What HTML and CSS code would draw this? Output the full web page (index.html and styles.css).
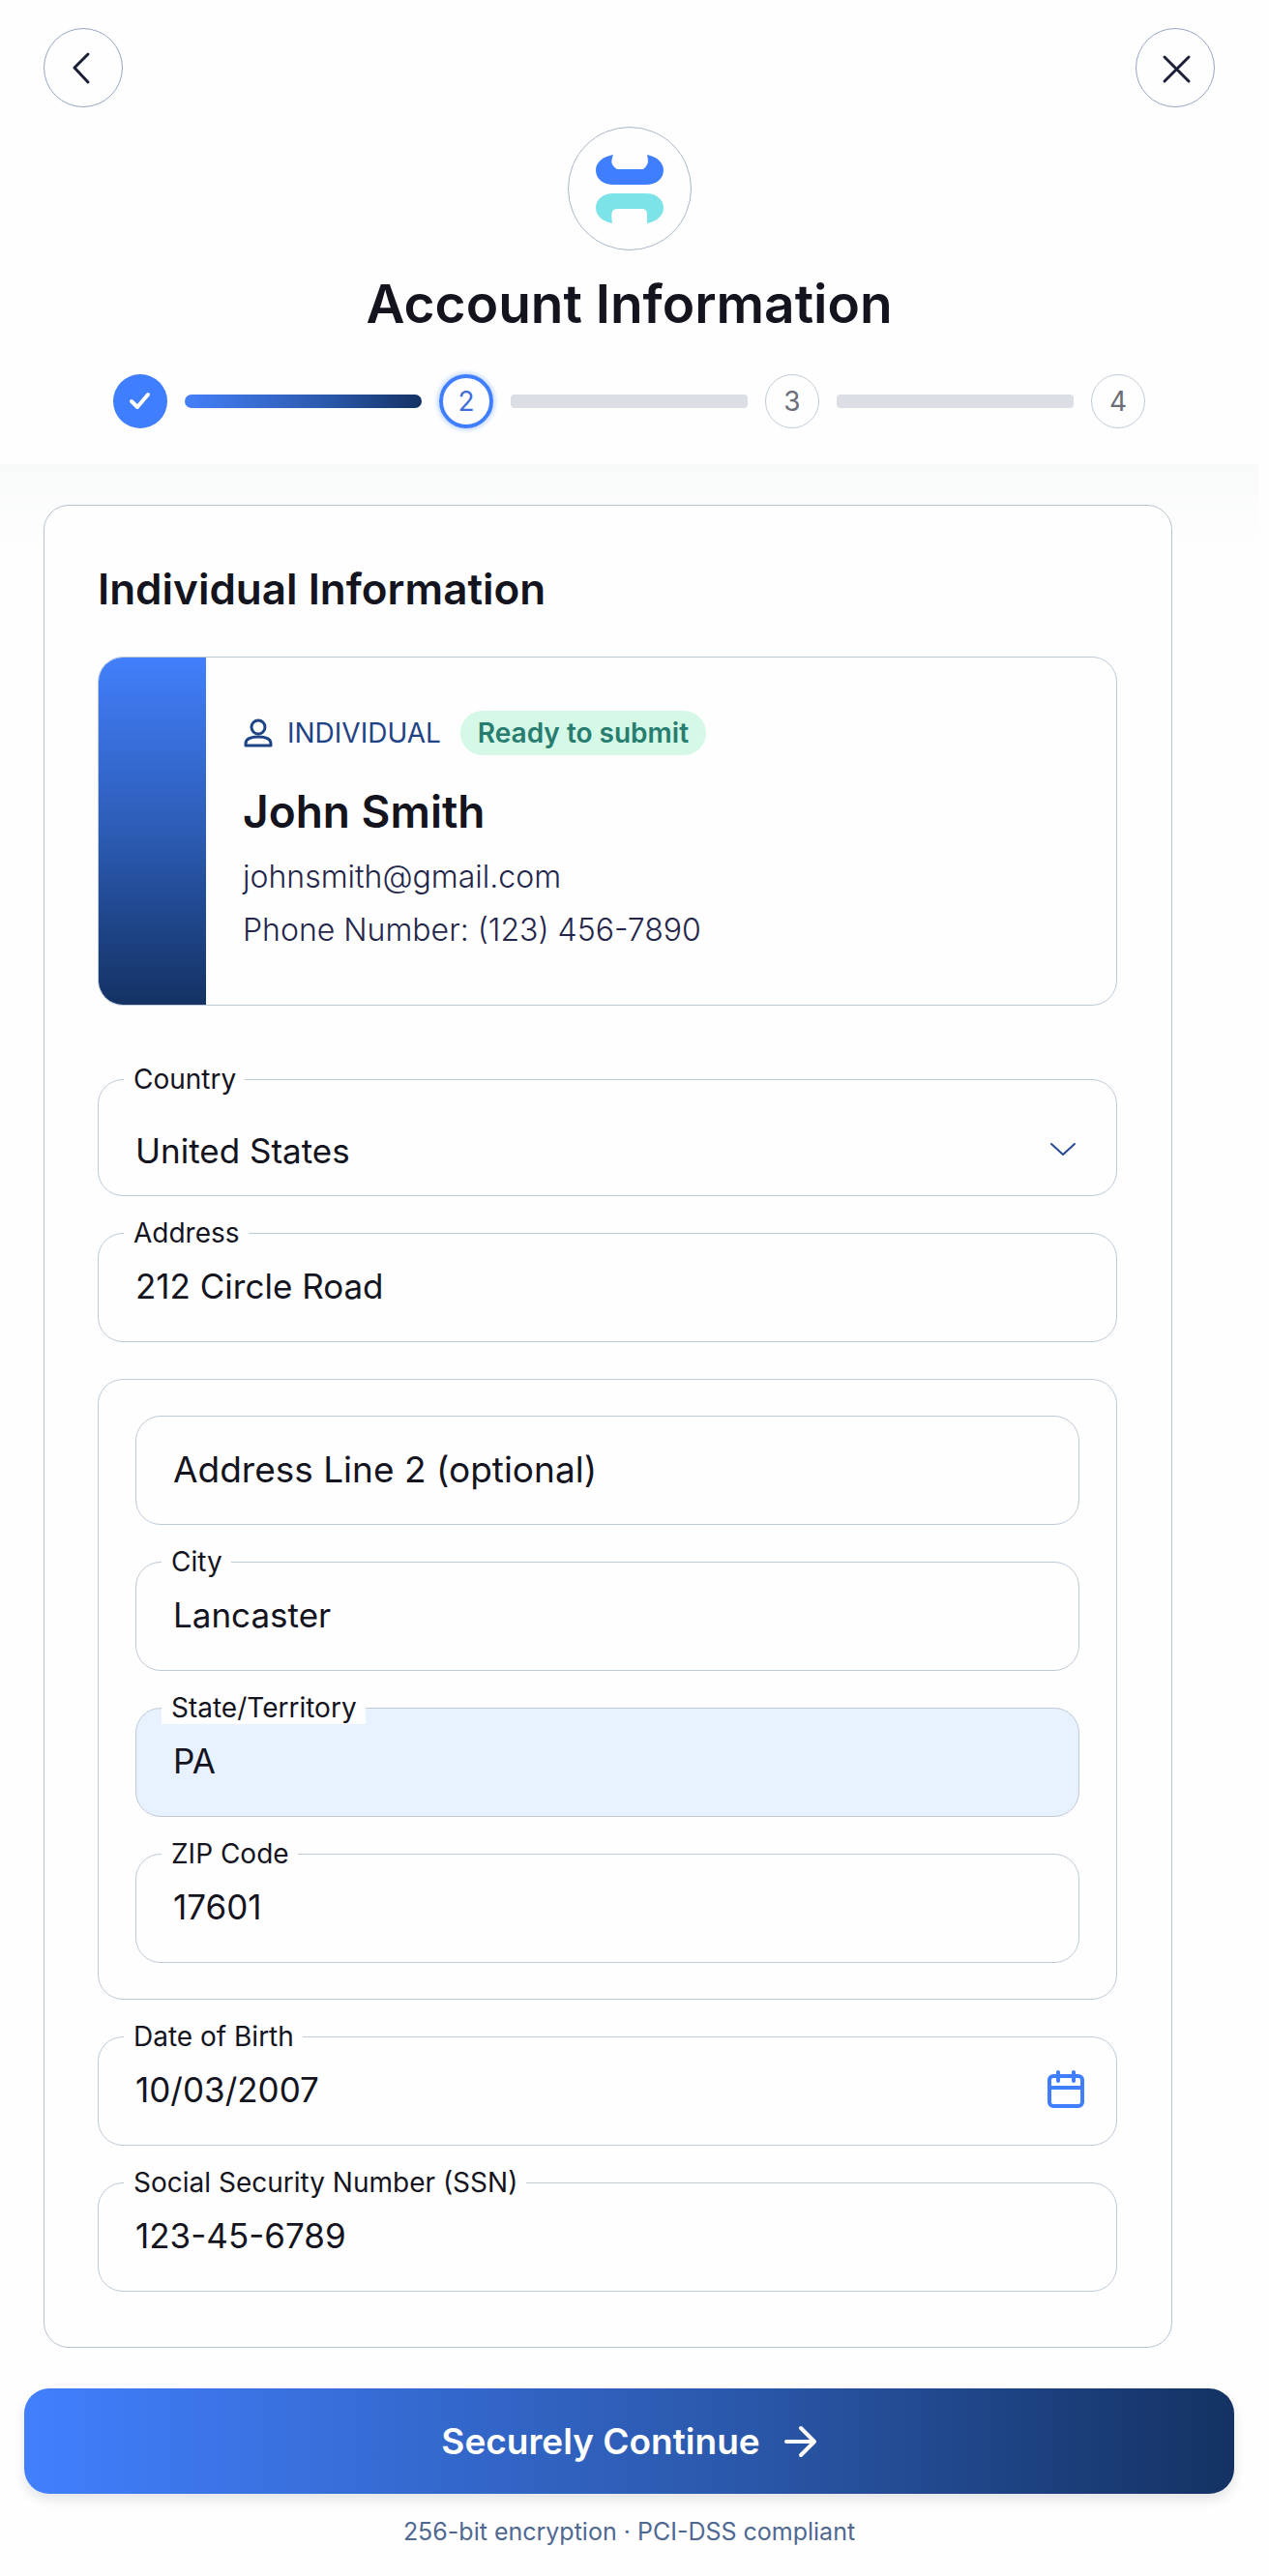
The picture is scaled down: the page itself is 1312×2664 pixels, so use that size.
FILE: index.html
```html
<!DOCTYPE html>
<html lang="en">
<head>
  <meta charset="UTF-8">
  <meta name="viewport" content="width=device-width, initial-scale=1">
  <title>Account Information</title>
  <link rel="stylesheet" href="styles.css">
</head>
<body>
  <header class="header">
    <div class="top-bar">
      <button type="button" class="round-button" aria-label="Back">
        <svg width="40" height="40" viewBox="0 0 40 40"><path d="M25 6 L11 20 L25 35"/></svg>
      </button>
      <button type="button" class="round-button" aria-label="Close">
        <svg width="40" height="40" viewBox="0 0 40 40"><path d="M9 9 L34 34 M34 9 L9 34"/></svg>
      </button>
    </div>

    <div class="logo">
      <svg width="70" height="71" viewBox="0 0 70 71">
        <path fill="#3f7efe" d="M18 0 C7 2 0 8 0 16 C0 25 8 31 18 31 H52 C62 31 70 25 70 16 C70 8 63 2 53 0 C55 8 54 11 49 15 H22 C16 11 15 8 18 0 Z"/>
        <path fill="#7ce3e8" d="M18 40 C8 40 0 46 0 55 C0 63 7 69 17 71 C16 62 15 56 23 56 H48 C54 56 53 62 53 71 C63 69 70 63 70 55 C70 46 62 40 52 40 Z"/>
      </svg>
    </div>

    <h1>Account Information</h1>

    <div class="stepper">
      <div class="step done">
        <svg width="24" height="24" viewBox="0 0 24 24"><path d="M3 12 L9 18 L20 5"/></svg>
      </div>
      <div class="bar filled"></div>
      <div class="step current">2</div>
      <div class="bar"></div>
      <div class="step">3</div>
      <div class="bar"></div>
      <div class="step">4</div>
    </div>
  </header>

  <form class="content">
    <section class="card">
      <h2>Individual Information</h2>

      <div class="profile">
        <div class="profile-stripe"></div>
        <div class="profile-body">
          <div class="profile-tags">
            <svg width="30" height="30" viewBox="0 0 30 30"><circle cx="15" cy="9" r="7"/><path d="M2 28 V26 C2 21 7 19 15 19 C23 19 28 21 28 26 V28 Z"/></svg>
            <span class="profile-type">INDIVIDUAL</span>
            <span class="badge">Ready to submit</span>
          </div>
          <h3>John Smith</h3>
          <p>johnsmith@gmail.com</p>
          <p>Phone Number: (123) 456-7890</p>
        </div>
      </div>

      <div class="fields">
        <div class="field">
          <label for="country">Country</label>
          <select id="country">
            <option>United States</option>
          </select>
          <svg class="chevron" width="28" height="18" viewBox="0 0 28 18"><path d="M2 3 L14 14 L26 3"/></svg>
        </div>

        <div class="field">
          <label for="address">Address</label>
          <input type="text" id="address" value="212 Circle Road">
        </div>

        <div class="field-group">
          <div class="field">
            <input type="text" id="address2" class="optional" placeholder="Address Line 2 (optional)" aria-label="Address Line 2 (optional)">
          </div>
          <div class="field">
            <label for="city">City</label>
            <input type="text" id="city" value="Lancaster">
          </div>
          <div class="field">
            <label for="state">State/Territory</label>
            <input type="text" id="state" class="autofilled" value="PA">
          </div>
          <div class="field">
            <label for="zip">ZIP Code</label>
            <input type="text" id="zip" value="17601">
          </div>
        </div>

        <div class="field">
          <label for="dob">Date of Birth</label>
          <input type="text" id="dob" value="10/03/2007">
          <svg class="calendar" width="40" height="40" viewBox="0 0 40 40"><rect x="3" y="6" width="34" height="31" rx="4"/><path d="M3 18 H37 M12 2 V11 M28 2 V11"/></svg>
        </div>

        <div class="field">
          <label for="ssn">Social Security Number (SSN)</label>
          <input type="text" id="ssn" value="123-45-6789">
        </div>
      </div>
    </section>

    <div class="actions">
      <button type="submit" class="continue">
        Securely Continue
        <svg width="34" height="34" viewBox="0 0 34 34"><path d="M2 17 H31 M17 3 L31 17 L17 31"/></svg>
      </button>
      <p class="note">256-bit encryption · PCI-DSS compliant</p>
    </div>
  </form>
</body>
</html>
```
FILE: styles.css
```css
* {
  box-sizing: border-box;
}
body {
  font-family: Inter, "Liberation Sans", sans-serif;
  margin: 0;
  padding-right: 11px;
  background-color: #fefefe;
  color: #14141f;
}
h1, h2, h3, p {
  margin: 0;
}
svg {
  fill: none;
  stroke-linecap: round;
  stroke-linejoin: round;
  flex-shrink: 0;
}

/* Header */
.header {
  padding: 29px 45px 37px;
  text-align: center;
}
.top-bar {
  display: flex;
  justify-content: space-between;
}
.round-button {
  display: flex;
  align-items: center;
  justify-content: center;
  width: 82px;
  height: 82px;
  padding: 0;
  border: 1px solid #94a6c2;
  border-radius: 50%;
  background: none;
  cursor: pointer;
}
.round-button svg {
  stroke: #1b1f38;
  stroke-width: 3;
}
.logo {
  display: flex;
  align-items: center;
  justify-content: center;
  width: 128px;
  height: 128px;
  margin: 20px auto 0;
  border: 1px solid #a9b7ca;
  border-radius: 50%;
}
h1 {
  margin: 20px 0 38px;
  font-size: 55px;
  line-height: 70px;
  font-weight: 600;
}
.stepper {
  display: flex;
  align-items: center;
  gap: 18px;
  padding: 0 72px;
}
.step {
  display: flex;
  align-items: center;
  justify-content: center;
  width: 56px;
  height: 56px;
  border: 1px solid #c1ccd9;
  border-radius: 50%;
  font-size: 28px;
  color: #6b6e78;
}
.step.done {
  border: none;
  background-color: #3f7efe;
}
.step.done svg {
  stroke: #fff;
  stroke-width: 4;
}
.step.current {
  border: 4px solid #3f7efe;
  box-shadow: 0 0 4px 2px #c5dafc;
  color: #3f6fd8;
}
.bar {
  flex: 1;
  height: 14px;
  border-radius: 4px;
  background-color: #dbdfe5;
}
.bar.filled {
  border-radius: 7px;
  background: linear-gradient(90deg, #4580f8, #2a58ab 60%, #143263);
}

/* Form card */
.content {
  padding-top: 42px;
  background: linear-gradient(#f8faf9, #fefefe 90px);
}
.card {
  margin: 0 89px 0 45px;
  padding: 56px 56px 57px 55px;
  border: 1px solid #b9c4d2;
  border-radius: 26px;
  background-color: #fefefe;
}
h2 {
  font-size: 44px;
  line-height: 60px;
  font-weight: 600;
}
.profile {
  display: flex;
  height: 361px;
  margin-top: 40px;
  border: 1px solid #bccada;
  border-radius: 26px;
  overflow: hidden;
}
.profile-stripe {
  width: 111px;
  background: linear-gradient(#427ffb, #2c5cb5 50%, #143263);
}
.profile-body {
  padding: 55px 38px;
}
.profile-tags {
  display: flex;
  align-items: center;
}
.profile-tags svg {
  margin: 0 15px 0 1px;
  stroke: #1f4485;
  stroke-width: 3;
}
.profile-type {
  font-size: 28px;
  color: #1f4485;
}
.badge {
  margin-left: 20px;
  padding: 0 18px;
  border-radius: 23px;
  background-color: #d6f8e6;
  color: #267d70;
  font-size: 28px;
  line-height: 46px;
  font-weight: 600;
}
h3 {
  margin: 28px 0 10px;
  font-size: 46px;
  line-height: 60px;
  font-weight: 600;
}
.profile p {
  font-size: 32px;
  line-height: 55px;
  font-weight: 300;
  color: #23264a;
}

/* Fields */
.fields {
  display: grid;
  gap: 38px;
  margin-top: 76px;
}
.field {
  position: relative;
}
.field label {
  position: absolute;
  top: -17px;
  left: 27px;
  padding: 0 9px 0 10px;
  background-color: #fefefe;
  font-size: 28px;
  line-height: 34px;
}
.field input,
.field select {
  display: block;
  width: 100%;
  height: 113px;
  padding: 0 38px 3px;
  border: 1px solid #bfcbd9;
  border-radius: 26px;
  outline: none;
  background-color: #fefefe;
  font-family: inherit;
  font-size: 35px;
  color: #14141f;
}
.field select {
  height: 121px;
  padding: 26px 38px 0;
  appearance: none;
}
.field input::placeholder {
  color: #14141f;
  opacity: 1;
}
.field .optional {
  font-size: 37px;
}
.field .autofilled {
  background-color: #e8f1fe;
}
.field-group {
  display: grid;
  gap: 38px;
  padding: 37px 38px;
  border: 1px solid #bfcbd9;
  border-radius: 26px;
}
.chevron,
.calendar {
  position: absolute;
  pointer-events: none;
}
.chevron {
  top: 64px;
  right: 42px;
  stroke: #234a92;
  stroke-width: 2;
}
.calendar {
  top: 35px;
  right: 33px;
  stroke: #3f7efe;
  stroke-width: 4;
}

/* Bottom action */
.actions {
  padding: 42px 25px 28px;
  text-align: center;
}
.continue {
  display: flex;
  align-items: center;
  justify-content: center;
  gap: 25px;
  width: 100%;
  height: 109px;
  border: none;
  border-radius: 26px;
  background: linear-gradient(90deg, #417ffd, #2a57a9 60%, #143263);
  box-shadow: 0 6px 12px rgba(30, 40, 60, 0.12);
  color: #fff;
  font-family: inherit;
  font-size: 37px;
  font-weight: 600;
  cursor: pointer;
}
.continue svg {
  stroke: #fff;
  stroke-width: 4;
}
.note {
  margin-top: 22px;
  font-size: 25px;
  line-height: 34px;
  color: #4f6892;
}
```
